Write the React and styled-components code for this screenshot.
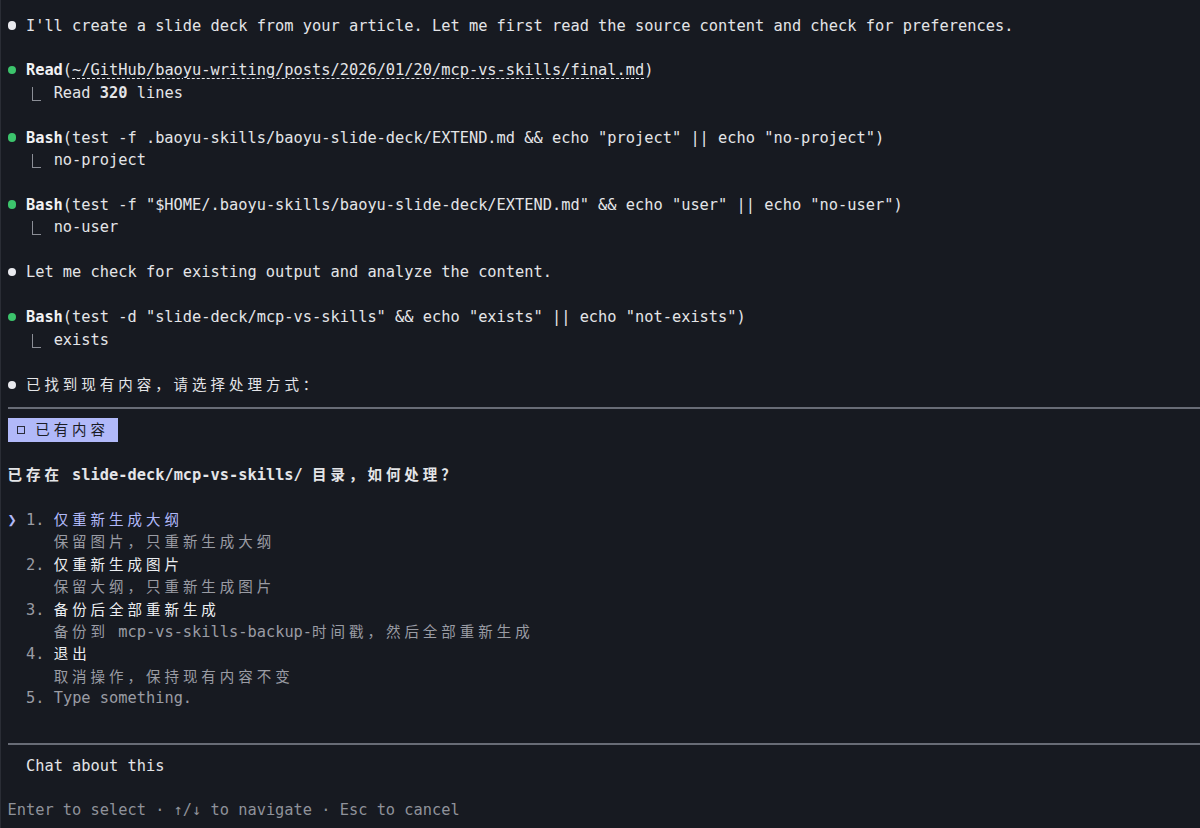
import React from "react";
import styled, { createGlobalStyle } from "styled-components";

const COL = "9.23px";
const LINE = "22.43px";

const GlobalStyle = createGlobalStyle`
  html, body {
    margin: 0;
    background: #171a21;
  }
`;

const Screen = styled.div`
  min-height: 828px;
  box-sizing: border-box;
  padding: 14.6px 0 0 6.5px;
  border-left: 1px solid #2a2d35;
  background: #171a21;
  color: #e4e5e8;
  font-family: "DejaVu Sans Mono", "Liberation Mono", monospace;
  font-size: 15.33px;
  line-height: ${LINE};
  overflow: hidden;
`;

const Line = styled.div`
  height: ${LINE};
  white-space: pre;
  color: ${(p) => p.$color || "inherit"};
  font-weight: ${(p) => (p.$bold ? 700 : 400)};
`;

const Cjk = styled.span`
  font-family: "Noto Sans CJK SC", sans-serif;
  font-size: 14.5px;
  letter-spacing: 3.96px;
`;

const Bullet = styled.span`
  display: inline-block;
  width: 8.5px;
  height: 8.5px;
  border-radius: 50%;
  background: ${(p) => p.$color};
  margin: 0 calc(2 * ${COL} - 8.9px) 0 0.4px;
  vertical-align: 1px;
`;

const ToolName = styled.span`
  font-weight: 700;
  color: #f2f2f4;
`;

const Path = styled.span`
  text-decoration: underline dashed;
  text-decoration-thickness: 1px;
  text-underline-offset: 3px;
`;

const Branch = styled.span`
  display: inline-block;
  vertical-align: top;
  box-sizing: border-box;
  width: 9px;
  height: 14px;
  margin: 5px calc(3 * ${COL} - 15px) 0 calc(2 * ${COL} + 6px);
  border-left: 1.5px solid #8b8e96;
  border-bottom: 1.5px solid #8b8e96;
`;

const Rule = styled.div`
  height: ${LINE};
  display: flex;
  align-items: center;
  &::before {
    content: "";
    flex: 1;
    height: 2px;
    margin-top: 2px;
    background: #686c76;
  }
`;

const Tag = styled.span`
  display: inline-block;
  background: #b1b9f9;
  color: #1a1c25;
  white-space: pre;
`;

const Box = styled.span`
  display: inline-block;
  width: ${COL};
  text-align: center;
  &::before {
    content: "";
    display: inline-block;
    width: 6px;
    height: 6px;
    border: 1px solid #2a2d3a;
    vertical-align: 1px;
  }
`;

const Pointer = styled.span`
  color: #b1b9f9;
  font-weight: 700;
`;

const Num = styled.span`
  color: #9a9ca4;
`;

const Title = styled.span`
  color: ${(p) => (p.$active ? "#b1b9f9" : "#eceef1")};
`;

const Dim = styled.span`
  color: #9a9ca4;
`;

// wraps CJK runs so they take two terminal columns per glyph
const T = ({ children }) => {
  const parts = String(children).split(/([\u3000-\u303f\u4e00-\u9fff\uff00-\uffef]+)/);
  return parts.map((s, i) =>
    i % 2 ? <Cjk key={i}>{s}</Cjk> : <React.Fragment key={i}>{s}</React.Fragment>
  );
};

const GREEN = "#3cc46c";
const WHITE = "#e9eaee";

const Tool = ({ name, children }) => (
  <Line>
    <Bullet $color={GREEN} />
    <ToolName>{name}</ToolName>
    {children}
  </Line>
);

const Result = ({ children }) => (
  <Line>
    <Branch />
    {children}
  </Line>
);

const options = [
  { title: "仅重新生成大纲", desc: "保留图片，只重新生成大纲" },
  { title: "仅重新生成图片", desc: "保留大纲，只重新生成图片" },
  { title: "备份后全部重新生成", desc: "备份到 mcp-vs-skills-backup-时间戳，然后全部重新生成" },
  { title: "退出", desc: "取消操作，保持现有内容不变" },
];

export default function App() {
  const selected = 0;
  return (
    <>
      <GlobalStyle />
      <Screen>
        <Line>
          <Bullet $color={WHITE} />
          I'll create a slide deck from your article. Let me first read the source content and check for preferences.
        </Line>
        <Line />
        <Tool name="Read">
          (<Path>~/GitHub/baoyu-writing/posts/2026/01/20/mcp-vs-skills/final.md</Path>)
        </Tool>
        <Result>
          Read <b>320</b> lines
        </Result>
        <Line />
        <Tool name="Bash">
          {`(test -f .baoyu-skills/baoyu-slide-deck/EXTEND.md && echo "project" || echo "no-project")`}
        </Tool>
        <Result>no-project</Result>
        <Line />
        <Tool name="Bash">
          {`(test -f "$HOME/.baoyu-skills/baoyu-slide-deck/EXTEND.md" && echo "user" || echo "no-user")`}
        </Tool>
        <Result>no-user</Result>
        <Line />
        <Line>
          <Bullet $color={WHITE} />
          Let me check for existing output and analyze the content.
        </Line>
        <Line />
        <Tool name="Bash">
          {`(test -d "slide-deck/mcp-vs-skills" && echo "exists" || echo "not-exists")`}
        </Tool>
        <Result>exists</Result>
        <Line />
        <Line>
          <Bullet $color={WHITE} />
          <T>已找到现有内容，请选择处理方式：</T>
        </Line>
        <Rule />
        <Line>
          <Tag>
            {" "}
            <Box /> <T>已有内容</T>{" "}
          </Tag>
        </Line>
        <Line />
        <Line $bold>
          <T>已存在 slide-deck/mcp-vs-skills/ 目录，如何处理？</T>
        </Line>
        <Line />
        {options.map((o, i) => (
          <React.Fragment key={i}>
            <Line>
              {i === selected ? <Pointer>❯</Pointer> : " "} <Num>{i + 1}.</Num>{" "}
              <Title $active={i === selected}>
                <T>{o.title}</T>
              </Title>
            </Line>
            <Line>
              {"     "}
              <Dim>
                <T>{o.desc}</T>
              </Dim>
            </Line>
          </React.Fragment>
        ))}
        <Line>
          {"  "}
          <Num>5.</Num> <Dim>Type something.</Dim>
        </Line>
        <Line />
        <Rule />
        <Line>{"  "}Chat about this</Line>
        <Line />
        <Line $color="#8f929a">Enter to select · ↑/↓ to navigate · Esc to cancel</Line>
      </Screen>
    </>
  );
}
